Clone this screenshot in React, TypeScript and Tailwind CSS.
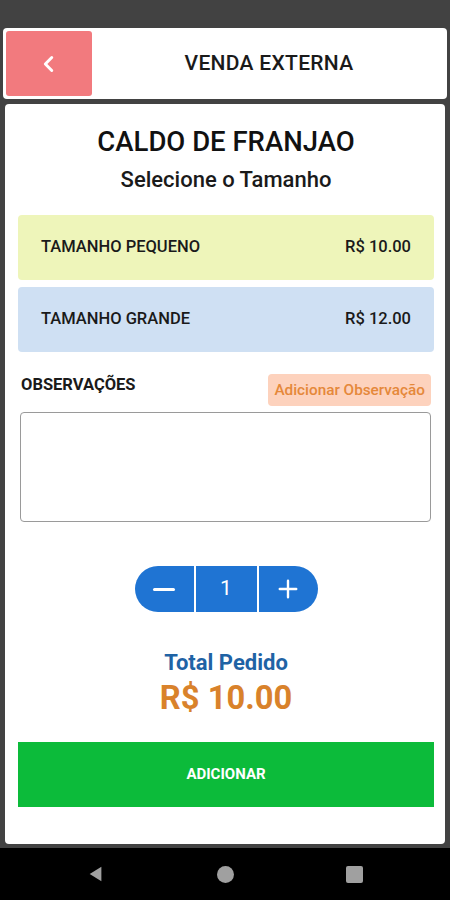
import React, { useState } from 'react';

const ChevronLeft: React.FC<{ className?: string }> = ({ className = 'w-5 h-5' }) => (
  <svg viewBox="0 0 24 24" fill="none" stroke="currentColor" strokeWidth={3.2} strokeLinecap="round" strokeLinejoin="round" className={className}>
    <path d="M15 5l-7 7 7 7" />
  </svg>
);

const sizes = [
  { label: 'TAMANHO PEQUENO', price: 10, bg: 'bg-[#eef5ba]' },
  { label: 'TAMANHO GRANDE', price: 12, bg: 'bg-[#cfe0f3]' },
];

const App: React.FC = () => {
  const [qty, setQty] = useState(1);
  const [selected] = useState(0);
  const total = sizes[selected].price * qty;

  return (
    <div className="w-[450px] h-[900px] bg-[#424242] flex flex-col font-['Roboto',sans-serif] overflow-hidden">
      <div className="h-[28px] shrink-0" />

      {/* header */}
      <header className="mx-[3px] h-[71px] bg-white rounded-[4px] p-[3px] flex items-stretch shrink-0">
        <button className="w-[86px] bg-[#f27a7e] rounded-[3px] flex items-center justify-center text-white">
          <ChevronLeft className="w-[22px] h-[22px]" />
        </button>
        <h1 className="flex-1 text-center self-center text-[21px] font-medium text-[#1a1a1a] tracking-[0.3px] pl-[2px]">VENDA EXTERNA</h1>
      </header>

      {/* conteúdo */}
      <main className="mx-[5px] mt-[5px] h-[740px] bg-white rounded-[4px] flex flex-col pl-[13px] pr-[11px] shrink-0">
        <h2 className="text-center text-[27.5px] font-medium text-[#111] mt-[22px] leading-[32px]">CALDO DE FRANJAO</h2>
        <p className="text-center text-[22px] font-medium text-[#1a1a1a] mt-[9px] leading-[26px]">Selecione o Tamanho</p>

        <div className="flex flex-col gap-[7px] mt-[22px]">
          {sizes.map((s) => (
            <div key={s.label} className={`${s.bg} h-[65px] rounded-[4px] flex items-center justify-between pl-[23px] pr-[23px] text-[16.5px] font-medium text-[#1a1a1a]`}>
              <span>{s.label}</span>
              <span>R$ {s.price.toFixed(2)}</span>
            </div>
          ))}
        </div>

        <div className="flex items-start justify-between mt-[22px] pl-[3px] pr-[3px]">
          <span className="text-[16.5px] font-bold text-[#1a1a1a] leading-[20px] mt-[1px]">OBSERVAÇÕES</span>
          <button className="bg-[#fdd2bd] text-[#e5883a] text-[15.3px] font-medium rounded-[4px] px-[6px] h-[32px]">Adicionar Observação</button>
        </div>

        <textarea className="mt-[6px] ml-[2px] mr-[3px] h-[110px] border border-[#9a9a9a] rounded-[4px] resize-none outline-none" />

        <div className="flex justify-center mt-[44px]">
          <div className="flex h-[46px] w-[183px] bg-[#1f74d3] rounded-full text-white overflow-hidden">
            <button onClick={() => setQty(Math.max(1, qty - 1))} className="w-[61px] flex items-center justify-center border-r-2 border-white">
              <span className="block w-[22px] h-[3px] bg-white rounded-full" />
            </button>
            <div className="flex-1 flex items-center justify-center text-[21px]">{qty}</div>
            <button onClick={() => setQty(qty + 1)} className="w-[61px] flex items-center justify-center border-l-2 border-white">
              <svg viewBox="0 0 24 24" className="w-[22px] h-[22px]" stroke="currentColor" strokeWidth={2.6} strokeLinecap="round">
                <path d="M12 3v18M3 12h18" />
              </svg>
            </button>
          </div>
        </div>

        <p className="text-center text-[22px] font-bold text-[#1f63a5] mt-[38px] leading-[26px]">Total Pedido</p>
        <p className="text-center text-[32.7px] font-bold text-[#d9822b] leading-[38px] mt-[3px]">R$ {total.toFixed(2)}</p>

        <button className="mt-[25px] h-[65px] bg-[#0cbb3a] text-white text-[15px] font-bold">ADICIONAR</button>
      </main>

      <div className="flex-1 bg-black mt-[4px] flex items-center justify-center gap-[112px]">
        <svg viewBox="0 0 20 20" className="w-[18px] h-[18px] text-[#a0a0a0]" fill="currentColor">
          <path d="M16 2v16L3 10z" />
        </svg>
        <span className="w-[17px] h-[17px] rounded-full bg-[#a0a0a0]" />
        <span className="w-[17px] h-[17px] rounded-[2px] bg-[#a0a0a0]" />
      </div>
    </div>
  );
};

export default App;
